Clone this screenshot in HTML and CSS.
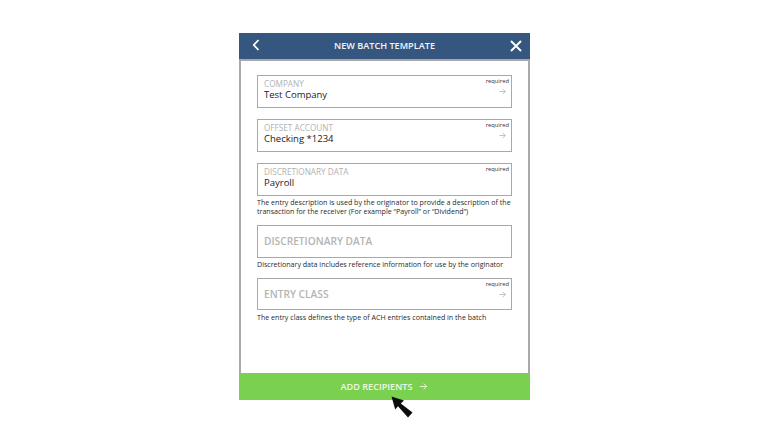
FILE: index.html
```html
<!DOCTYPE html>
<html lang="en">
<head>
<meta charset="utf-8">
<title>New Batch Template</title>
<link rel="stylesheet" href="styles.css">
</head>
<body>
<div class="phone">
  <header class="topbar">
    <svg class="back" viewBox="0 0 8 12" width="8" height="12"><path d="M6.5 1 L1.8 6 L6.5 11" fill="none" stroke="#fff" stroke-width="1.8"/></svg>
    <h1 class="title">NEW BATCH TEMPLATE</h1>
    <svg class="close" viewBox="0 0 12 12" width="12" height="12"><path d="M1 1 L11 11 M11 1 L1 11" fill="none" stroke="#fff" stroke-width="1.9"/></svg>
  </header>
  <main class="form">
    <div class="field">
      <span class="req">required</span>
      <span class="label">COMPANY</span>
      <span class="value">Test Company</span>
      <svg class="arrow" viewBox="0 0 8 8" width="7" height="7"><path d="M0.5 4 H7 M4.2 1 L7.2 4 L4.2 7" fill="none" stroke="#a9a9a9" stroke-width="0.8"/></svg>
    </div>
    <div class="field gap">
      <span class="req">required</span>
      <span class="label">OFFSET ACCOUNT</span>
      <span class="value">Checking *1234</span>
      <svg class="arrow" viewBox="0 0 8 8" width="7" height="7"><path d="M0.5 4 H7 M4.2 1 L7.2 4 L4.2 7" fill="none" stroke="#a9a9a9" stroke-width="0.8"/></svg>
    </div>
    <div class="field gap">
      <span class="req">required</span>
      <span class="label">DISCRETIONARY DATA</span>
      <span class="value">Payroll</span>
    </div>
    <p class="help">The entry description is used by the originator to provide a description of the transaction for the receiver (For example “Payroll” or “Dividend”)</p>
    <div class="field empty gap-lg">
      <span class="placeholder">DISCRETIONARY DATA</span>
    </div>
    <p class="help">Discretionary data includes reference information for use by the originator</p>
    <div class="field empty gap-md">
      <span class="req">required</span>
      <span class="placeholder">ENTRY CLASS</span>
      <svg class="arrow" viewBox="0 0 8 8" width="7" height="7"><path d="M0.5 4 H7 M4.2 1 L7.2 4 L4.2 7" fill="none" stroke="#a9a9a9" stroke-width="0.8"/></svg>
    </div>
    <p class="help">The entry class defines the type of ACH entries contained in the batch</p>
  </main>
  <footer class="action">
    <span>ADD RECIPIENTS</span>
    <svg viewBox="0 0 10 10" width="9" height="9"><path d="M1 5 H8.5 M5.3 1.8 L8.5 5 L5.3 8.2" fill="none" stroke="#e6f7d8" stroke-width="1.1"/></svg>
  </footer>
  <svg class="cursor" viewBox="0 0 22 22" width="22" height="22"><path d="M0.5 0.5 L13 4.5 L9.8 7.5 L21.5 16.5 L17 21.5 L7 10.2 L4.2 13.5 Z" fill="#0c0c0c"/></svg>
</div>
</body>
</html>
```
FILE: styles.css
```css
* { box-sizing: border-box; }
html, body { margin: 0; height: 100%; background: #fff; }
body { display: flex; justify-content: center; font-family: "Open Sans", "Liberation Sans", sans-serif; }
.phone { position: relative; width: 291px; margin: 33px 0 0 1px; height: 367px; display: flex; flex-direction: column; }
.topbar { flex: none; height: 26px; background: #35577f; display: flex; align-items: center; justify-content: center; position: relative; }
.title { margin: 0; font-size: 9.15px; font-weight: 600; color: #f4f6f9; line-height: 1; }
.back { position: absolute; left: 13px; top: 6px; }
.close { position: absolute; right: 8px; top: 7px; }
.form { flex: 1; border: 2px solid #a9a9ad; border-bottom: 0; padding: 14px 16px 0 16px; }
.field { position: relative; height: 32.5px; border: 1.5px solid #a8a8a8; padding: 2px 6px 0; display: flex; flex-direction: column; }
.gap { margin-top: 11.5px; }
.gap-lg { margin-top: 9px; }
.gap-md { margin-top: 8.5px; }
.req { position: absolute; top: 1px; right: 2px; font-size: 5.8px; line-height: 8px; color: #333; }
.label { font-size: 8.2px; line-height: 11px; color: #b2b2b2; }
.value { font-size: 9.5px; line-height: 11px; color: #222; }
.arrow { position: absolute; right: 5px; top: 12px; }
.empty { justify-content: center; padding-top: 0; }
.placeholder { font-size: 10.2px; font-weight: 600; color: #b4b4b4; line-height: 14px; }
.help { margin: 2.5px 0 0; font-size: 7.1px; line-height: 9px; color: #2a2a2a; }
.action { flex: none; height: 27px; background: #7ad14f; color: #eef9e4; display: flex; align-items: center; justify-content: center; gap: 7px; font-size: 9.1px; font-weight: 600; }
.cursor { position: absolute; left: 152px; top: 363px; }
```
